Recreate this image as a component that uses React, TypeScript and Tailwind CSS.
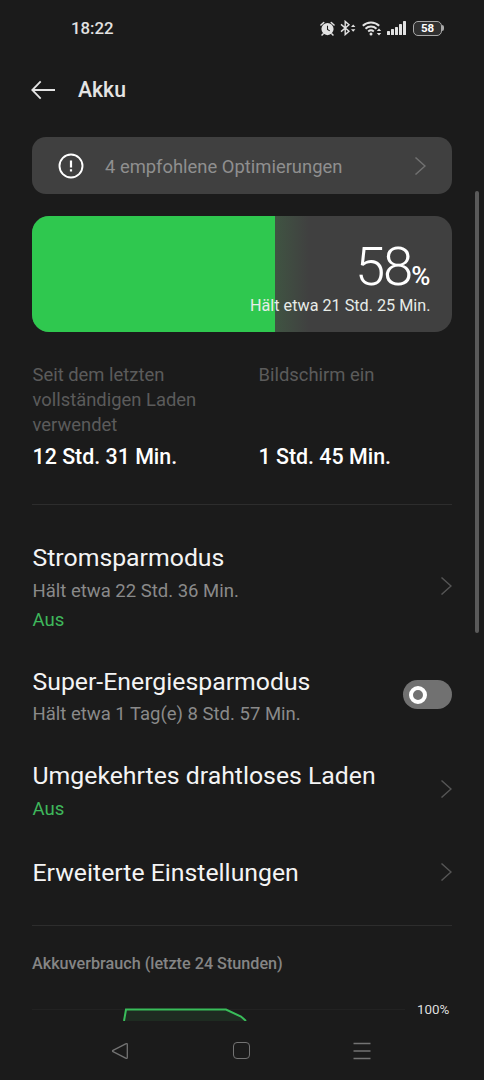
import type { ReactNode } from "react";

function Chevron({ className = "" }: { className?: string }) {
  return (
    <svg viewBox="0 0 12 20" fill="none" stroke="currentColor" strokeWidth="1.5" className={`h-5 w-3 shrink-0 ${className}`}>
      <path d="M1.5 1.5 11 10l-9.5 8.5" />
    </svg>
  );
}

function StatusBar() {
  return (
    <div className="flex h-14 shrink-0 items-center justify-between pr-[40px] pl-[71px] text-[#e2e2e2]">
      <span className="text-[16.8px] leading-5 font-medium">18:22</span>
      <div className="flex items-center">
        <svg viewBox="0 0 16 16" className="size-[15px]">
          <path d="M1 4.3 4 1.6M15 4.3l-3-2.7M3.2 13.8l-1 1.2M12.8 13.8l1 1.2" stroke="currentColor" strokeWidth="1.6" strokeLinecap="round" />
          <circle cx="8" cy="8.6" r="6.5" fill="currentColor" />
          <path d="M8 5v4l2.4 1.5" fill="none" stroke="#1b1b1b" strokeWidth="1.1" />
        </svg>
        <svg viewBox="0 0 16 16" className="ml-[5px] size-4" fill="none" stroke="currentColor" strokeWidth="1.4">
          <path d="M1 4.4 9 11.2 5.2 14.6V1.4L9 4.8l-8 6.8" />
          <path d="m11 7 2.2-2.5L15.4 7zM11 9.2l2.2 2.5 2.2-2.5z" fill="currentColor" stroke="none" />
        </svg>
        <svg viewBox="0 0 20 16" className="ml-1.5 h-4 w-5" fill="none" stroke="currentColor" strokeWidth="2">
          <path d="M.8 5.7a12 12 0 0 1 16.4 0M3.5 8.8a8 8 0 0 1 11 0M6.2 11.5a4.3 4.3 0 0 1 5.6 0" />
          <circle cx="9" cy="14" r="1.5" fill="currentColor" stroke="none" />
          <path d="m14.8 11 2.2-2.5 2.2 2.5zM14.8 13l2.2 2.5 2.2-2.5z" fill="currentColor" stroke="none" />
        </svg>
        <svg viewBox="0 0 20 16" className="ml-[5px] h-4 w-5" fill="currentColor">
          <rect x="0" y="11" width="3" height="4" rx=".6" />
          <rect x="4" y="9" width="3" height="6" rx=".6" />
          <rect x="8" y="7" width="3" height="8" rx=".6" />
          <rect x="12" y="4" width="3" height="11" rx=".6" />
          <rect x="16" y="1" width="3" height="14" rx=".6" />
        </svg>
        <div className="ml-1.5 flex items-center">
          <div className="flex h-[15px] w-[29px] items-center justify-center rounded-[5px] border-[1.5px] border-[#a8a8a8] bg-[#303030] pt-px text-[11.5px] leading-none font-bold text-white">
            58
          </div>
          <div className="h-1.5 w-[2px] rounded-r bg-[#a8a8a8]" />
        </div>
      </div>
    </div>
  );
}

function Header() {
  return (
    <header className="flex h-[68px] shrink-0 items-center pl-[31px] text-[#e4e4e4]">
      <svg viewBox="0 0 25 20" className="h-5 w-[25px]" fill="none" stroke="currentColor" strokeWidth="1.8">
        <path d="M9.7 1.3 1.3 10l8.4 8.7M1.5 10H24" />
      </svg>
      <h1 className="ml-[22px] text-[21.2px] leading-7 font-medium">Akku</h1>
    </header>
  );
}

function BatteryCard() {
  return (
    <section className="relative mt-[22px] h-[116px] overflow-hidden rounded-[17px] bg-[#404040]">
      <div className="flex h-full">
        <div className="w-[243px] bg-[#2fc84f]" />
        <div className="w-[34px] bg-linear-to-r from-[#3f5442] to-[#404040]" />
      </div>
      {/* The label runs over the edge of the charge fill */}
      <div className="absolute top-[25px] right-[21.5px] flex flex-col items-end text-white">
        <div className="flex h-[50px] items-baseline leading-[50px]">
          <span className="text-[54.5px] font-light tracking-[-2px]">58</span>
          <span className="text-[26px] leading-none font-medium">%</span>
        </div>
        <span className="mt-[4px] text-[16.2px] leading-[22px] whitespace-nowrap text-[#e7ece8]">Hält etwa 21 Std. 25 Min.</span>
      </div>
    </section>
  );
}

function Stat({ label, value }: { label: string; value: string }) {
  return (
    <div className="flex h-[109px] flex-col justify-between pl-[0.5px]">
      <p className="text-[18.4px] leading-[25px] text-[#5b5b5b]">{label}</p>
      <p className="text-[21.4px] leading-[28px] font-medium text-white">{value}</p>
    </div>
  );
}

type RowProps = {
  title: string;
  detail?: string;
  state?: string;
  className?: string;
  children: ReactNode;
};

function SettingRow({ title, detail, state, className = "", children }: RowProps) {
  return (
    <div className={`flex items-center justify-between ${className}`}>
      <div className="pl-[0.5px]">
        <h2 className="text-[24.8px] leading-[34px] whitespace-nowrap text-[#f4f4f4]">{title}</h2>
        {detail && <p className="mt-[3.5px] text-[18.5px] leading-[24px] text-[#8a8a8a]">{detail}</p>}
        {state && <p className={`text-[18.5px] leading-[24px] text-[#3fb85c] ${detail ? "mt-[5.5px]" : "mt-[3.5px]"}`}>{state}</p>}
      </div>
      {children}
    </div>
  );
}

function UsageChart() {
  return (
    <div className="mt-[21px] flex h-[24px] overflow-hidden">
      <svg viewBox="0 0 373 24" className="h-6 w-[373px]" fill="none">
        <path d="M0 12.5H373" stroke="#222222" />
        <path d="M92 24 94 12.5H194L209 19.5 214 24z" fill="#1e2b21" />
        <path d="M92 24 94 12.5H194L209 19.5 214 24" stroke="#39bd5a" strokeWidth="2" />
      </svg>
      <span className="ml-[12px] text-[13.4px] leading-[26px] text-[#dedede]">100%</span>
    </div>
  );
}

function NavBar() {
  return (
    <nav className="flex h-[59px] shrink-0 items-center pr-[62px] pl-[60px] text-[#737373]">
      <div className="flex flex-1 justify-center">
        <svg viewBox="0 0 18 18" className="size-[18px]" fill="none" stroke="currentColor" strokeWidth="1.3" strokeLinejoin="round">
          <path d="M2 8.3 14.7 1.8Q16.3 1.1 16.3 2.7V15.3Q16.3 16.9 14.7 16.2L2 9.7Q1 9 2 8.3z" />
        </svg>
      </div>
      <div className="flex flex-1 justify-center">
        <div className="size-[17px] rounded-[4px] border-[1.5px] border-current" />
      </div>
      <div className="flex flex-1 justify-center">
        <svg viewBox="0 0 18 18" className="size-[18px]" stroke="currentColor" strokeWidth="1.4">
          <path d="M.5 1.5h17M.5 9h17M.5 16.5h17" />
        </svg>
      </div>
    </nav>
  );
}

export default function App() {
  return (
    <div className="relative flex h-[1080px] w-[484px] flex-col overflow-hidden bg-[#1b1b1b] font-[Roboto,sans-serif]">
      <StatusBar />
      <Header />
      <main className="h-[897px] shrink-0 overflow-hidden px-8 pt-[13px]">
        <div className="flex h-[57px] items-center rounded-[14px] bg-[#404040] px-[26px]">
          <svg viewBox="0 0 26 26" className="size-[26px]" fill="none" stroke="white">
            <circle cx="13" cy="13" r="11.5" strokeWidth="1.9" />
            <path d="M13 7.5v7M13 16.2v2.2" strokeWidth="2.2" />
          </svg>
          <span className="mt-[3px] ml-[21px] flex-1 text-[18.4px] leading-6 text-[#8f8f8f]">4 empfohlene Optimierungen</span>
          <Chevron className="text-[#717171]" />
        </div>
        <BatteryCard />
        <section className="mt-[30px] grid h-[143px] grid-cols-[226px_1fr] border-b border-[#2d2d2d]">
          <Stat label="Seit dem letzten vollständigen Laden verwendet" value="12 Std. 31 Min." />
          <Stat label="Bildschirm ein" value="1 Std. 45 Min." />
        </section>
        <section className="border-b border-[#2d2d2d] pt-[36px] pb-[35.5px]">
          <SettingRow title="Stromsparmodus" detail="Hält etwa 22 Std. 36 Min." state="Aus">
            <Chevron className="mb-[2px] text-[#555555]" />
          </SettingRow>
          <SettingRow title="Super-Energiesparmodus" detail="Hält etwa 1 Tag(e) 8 Std. 57 Min." className="mt-[32.5px]">
            <div className="mb-[1px] flex h-[29px] w-[49px] items-center rounded-full bg-[#717171] pl-[6px]">
              <div className="size-[18px] rounded-full border-4 border-white" />
            </div>
          </SettingRow>
          <SettingRow title="Umgekehrtes drahtloses Laden" state="Aus" className="mt-[33px]">
            <Chevron className="mb-[1px] text-[#555555]" />
          </SettingRow>
          <SettingRow title="Erweiterte Einstellungen" className="mt-[35px]">
            <Chevron className="mb-[1px] text-[#555555]" />
          </SettingRow>
        </section>
        <h3 className="mt-[26px] text-[16.2px] leading-6 font-medium text-[#858585]">Akkuverbrauch (letzte 24 Stunden)</h3>
        <UsageChart />
      </main>
      <NavBar />
      {/* Scroll indicator */}
      <div className="absolute top-[191px] right-[5px] h-[442px] w-[4px] rounded-full bg-[#5a5a5a]" />
    </div>
  );
}
